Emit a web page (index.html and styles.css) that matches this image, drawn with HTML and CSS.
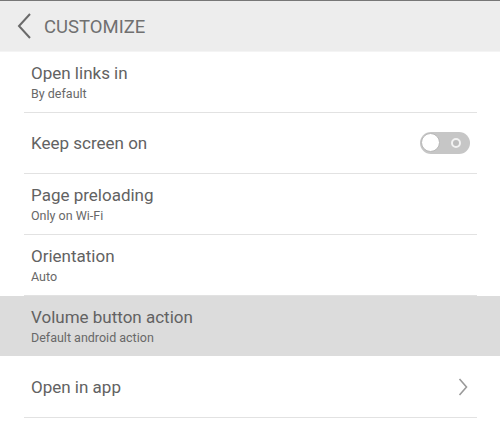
FILE: index.html
```html
<!DOCTYPE html>
<html lang="en">
<head>
	<meta charset="UTF-8">
	<meta name="viewport" content="width=device-width, initial-scale=1.0">
	<title>Customize</title>
	<link rel="stylesheet" href="styles.css">
</head>
<body>
	<div class="header">
		<svg class="back" width="16" height="26" viewBox="0 0 16 26">
			<polyline points="13,1 2,13 13,25" fill="none" stroke="#6a6a6a" stroke-width="2"/>
		</svg>
		<span class="header-title">CUSTOMIZE</span>
	</div>

	<div class="list">
		<div class="item">
			<div class="text">
				<div class="title">Open links in</div>
				<div class="subtitle">By default</div>
			</div>
		</div>
		<div class="item">
			<div class="text">
				<div class="title">Keep screen on</div>
			</div>
			<div class="toggle">
				<span class="knob"></span>
				<span class="ring"></span>
			</div>
		</div>
		<div class="item">
			<div class="text">
				<div class="title">Page preloading</div>
				<div class="subtitle">Only on Wi-Fi</div>
			</div>
		</div>
		<div class="item">
			<div class="text">
				<div class="title">Orientation</div>
				<div class="subtitle">Auto</div>
			</div>
		</div>
		<div class="item pressed">
			<div class="text">
				<div class="title">Volume button action</div>
				<div class="subtitle">Default android action</div>
			</div>
		</div>
		<div class="item">
			<div class="text">
				<div class="title">Open in app</div>
			</div>
			<svg class="chevron" width="10" height="18" viewBox="0 0 10 18">
				<polyline points="1.5,1 8.5,9 1.5,17" fill="none" stroke="#9a9a9a" stroke-width="1.6"/>
			</svg>
		</div>
	</div>
</body>
</html>
```

FILE: styles.css
```css
body {
	margin: 0;
	font-family: Roboto, "Liberation Sans", sans-serif;
	background-color: #fff;
	border-top: 1px solid #777;
}
.header {
	display: flex;
	align-items: center;
	height: 50px;
	padding-left: 17px;
	background-color: #ededed;
	border-bottom: 1px solid #f4f4f4;
}
.back {
	margin-right: 11px;
}
.header-title {
	font-size: 18.5px;
	color: #707070;
	margin-top: 2px;
}
.item {
	display: flex;
	align-items: center;
	box-sizing: border-box;
	height: 61px;
	padding: 0 31px 1px;
	position: relative;
}
.item::after {
	content: "";
	position: absolute;
	left: 24px;
	right: 23px;
	bottom: 0;
	height: 1px;
	background-color: #e2e2e2;
}
.pressed {
	background-color: #dcdcdc;
}
.pressed::after {
	left: 0;
	right: 0;
	background-color: #fff;
}
.text {
	flex: 1;
}
.title {
	font-size: 17px;
	color: #626262;
	line-height: 21px;
}
.subtitle {
	font-size: 12.5px;
	color: #686868;
	line-height: 16px;
	margin-top: 2px;
}
.toggle {
	position: relative;
	width: 50px;
	height: 22px;
	border-radius: 11px;
	background-color: #c6c6c6;
	margin-right: -1px;
}
.knob {
	position: absolute;
	left: 1px;
	top: 1px;
	width: 17px;
	height: 17px;
	border: 1.5px solid #b8b8b8;
	border-radius: 50%;
	background-color: #fff;
}
.ring {
	position: absolute;
	left: 31px;
	top: 6px;
	width: 6px;
	height: 6px;
	border: 2px solid #f2f2f2;
	border-radius: 50%;
	background-color: #bdbdbd;
}
.chevron {
	margin-right: 1px;
}
```
